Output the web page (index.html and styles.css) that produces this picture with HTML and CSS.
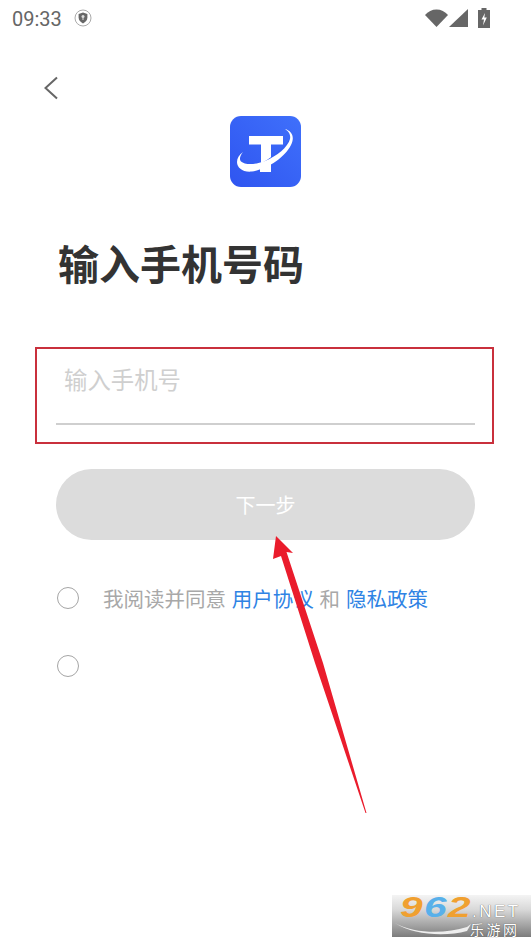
FILE: index.html
```html
<!DOCTYPE html>
<html lang="zh-CN">
<head>
<meta charset="utf-8">
<title>输入手机号码</title>
<link rel="stylesheet" href="styles.css">
</head>
<body>
<div class="screen">
  <header class="status">
    <div class="status-left">
      <span class="time">09:33</span>
      <svg class="shield" width="18" height="18" viewBox="0 0 18 18"><circle cx="9" cy="9" r="8" fill="none" stroke="#aaa" stroke-width="1"/><path d="M9 3.600l4.400 1.400v3.600c0 2.800-1.900 4.600-4.400 5.800-2.500-1.200-4.400-3-4.400-5.800V5z" fill="#666"/><circle cx="9" cy="7.600" r="1.500" fill="#ddd"/><path d="M8.500 9h1v2h-1z" fill="#ddd"/></svg>
    </div>
    <div class="status-right">
      <svg width="23" height="18" viewBox="0 0 23 18"><path d="M0 6C3 2.500 7 .5 11.500 .5S20 2.500 23 6L11.500 18z" fill="#666"/></svg>
      <svg width="19" height="18" viewBox="0 0 19 18"><path d="M19 0v18H0z" fill="#666"/></svg>
      <svg class="battery" width="12" height="20" viewBox="0 0 12 20"><path d="M3.500 0h5v2H12v18H0V2h3.500z" fill="#666"/><path d="M7 5L3.500 11.500H6l-1 6 3.800-8H6.300z" fill="#fff"/></svg>
    </div>
  </header>

  <button class="back" aria-label="返回">
    <svg width="16" height="24" viewBox="0 0 16 24"><path d="M13 1.500L1.500 12 13 22.500" fill="none" stroke="#666" stroke-width="2"/></svg>
  </button>

  <div class="logo">
    <svg width="71" height="71" viewBox="0 0 71 71">
      <defs><linearGradient id="lg" x1="1" y1="0" x2="0" y2="1"><stop offset="0" stop-color="#3f70fb"/><stop offset="1" stop-color="#2f55f0"/></linearGradient></defs>
      <rect width="71" height="71" rx="11" fill="url(#lg)"/>
      <path d="M19 20h34v8.500H41V56H30v-4h1V28.500H19z" fill="#fff"/>
      <path d="M20 51C30 51 45 42 60 24" fill="none" stroke="#3560f3" stroke-width="1.800"/>
      <path d="M55 13C62 15 65 21 61 29 55 41 38 53 22 55.500 13 56.500 7 52 7 46 7 42 9 39 13 36 10 40 9 43 11 45.500 15 49 25 49 35 45 47 40 58 31 60 23 61 18 58 15 55 13z" fill="#fff"/>
    </svg>
  </div>

  <h1 class="title">输入手机号码</h1>

  <div class="field-mark">
    <div class="field">
      <span class="placeholder">输入手机号</span>
    </div>
  </div>

  <button class="next">下一步</button>

  <div class="agree">
    <span class="radio"></span>
    <p class="agree-text">我阅读并同意 <a class="link">用户协议</a> 和 <a class="link">隐私政策</a></p>
  </div>
  <div class="agree second">
    <span class="radio"></span>
  </div>

  <svg class="arrow" width="110" height="290" viewBox="0 0 110 290">
    <path d="M16 6L33 23 26.500 22 63 133 106.500 283 105.500 283 55 133 21 26 13 29z" fill="#ea1c2c"/>
  </svg>

  <div class="watermark">
    <svg class="wm-swoosh" width="76" height="14" viewBox="0 0 76 14"><path d="M0 1C20 12 50 12 72 5L76 2 72 9C50 15 18 13 0 1z" fill="#eee"/></svg>
    <div class="wm-top"><span class="wm-num wm-9">9</span><span class="wm-num wm-6">6</span><span class="wm-num wm-2">2</span><span class="wm-net">.NET</span></div>
    <div class="wm-cn">乐游网</div>
  </div>
</div>
</body>
</html>
```

FILE: styles.css
```css
* { box-sizing: border-box; }
html, body { margin: 0; padding: 0; background: #fff; }
body { font-family: "Noto Sans CJK SC", "Noto Sans", sans-serif; }
.screen { position: relative; width: 531px; height: 944px; overflow: hidden; }

.status { height: 36px; padding: 0 41px 0 12px; display: flex; justify-content: space-between; align-items: center; }
.status-left { display: flex; align-items: center; gap: 12px; }
.time { font-family: Roboto, sans-serif; font-size: 20px; line-height: 24px; color: #666; padding-top: 1px; }
.status-right { display: flex; align-items: center; gap: 1px; }
.battery { margin-left: 9px; }

.back { display: block; width: 16px; height: 24px; margin: 40px 0 0 44px; padding: 0; border: 0; background: none; }
.back svg { display: block; }

.logo { width: 71px; height: 71px; margin: 16px 0 0 230px; }
.logo svg { display: block; }

.title { margin: 45px 0 0 58px; font-size: 41px; line-height: 60px; font-weight: 700; color: #333; letter-spacing: 0; }

.field-mark { width: 459px; height: 97px; margin: 55px 0 0 35px; border: 2px solid #c9303c; padding: 0 17px 0 19px; }
.field { height: 76px; border-bottom: 2px solid #cfcfcf; padding: 12px 0 0 8px; }
.placeholder { font-size: 23.4px; line-height: 36px; color: #cfcfcf; display: block; }

.next { display: block; width: 419px; height: 71px; margin: 25px 0 0 56px; border: 0; border-radius: 36px; background: #dcdcdc; color: #fff; font: 20px/71px "Noto Sans CJK SC", sans-serif; text-align: center; padding: 0; }

.agree { display: flex; align-items: center; height: 30px; margin: 43px 0 0 57px; gap: 24px; }
.agree.second { margin-top: 38px; }
.radio { flex: none; width: 22px; height: 22px; border: 1.5px solid #a5a5a5; border-radius: 50%; }
.agree-text { margin: 0; font-size: 20.5px; line-height: 30px; color: #a8a8a8; white-space: nowrap; word-spacing: 1.200px; }
.link { color: #2f83e4; }

.arrow { position: absolute; left: 260px; top: 530px; }

.watermark { position: absolute; left: 392px; top: 895px; width: 139px; height: 42px; padding: 1px 0 0 8px; background: linear-gradient(#f4f4f4, #d8d8d8 35%, #7c7c7c); }
.wm-swoosh { position: absolute; left: 3px; top: 27px; }
.wm-top { display: flex; align-items: baseline; height: 24px; font-family: "Liberation Sans", sans-serif; line-height: 22px; }
.wm-num { display: block; width: 24px; font-size: 29px; font-weight: 700; font-style: italic; transform: scaleX(1.400); transform-origin: left; }
.wm-9, .wm-2 { color: #f0a030; }
.wm-6 { color: #58b0ea; }
.wm-net { font-size: 17px; line-height: 14px; color: #fff; letter-spacing: 2.500px; text-shadow: 0 0 1px #333; }
.wm-cn { margin: 2px 0 0 70px; font-size: 14px; line-height: 15px; letter-spacing: 2.500px; color: #fff; text-shadow: 0 0 1px #333; white-space: nowrap; }
```
